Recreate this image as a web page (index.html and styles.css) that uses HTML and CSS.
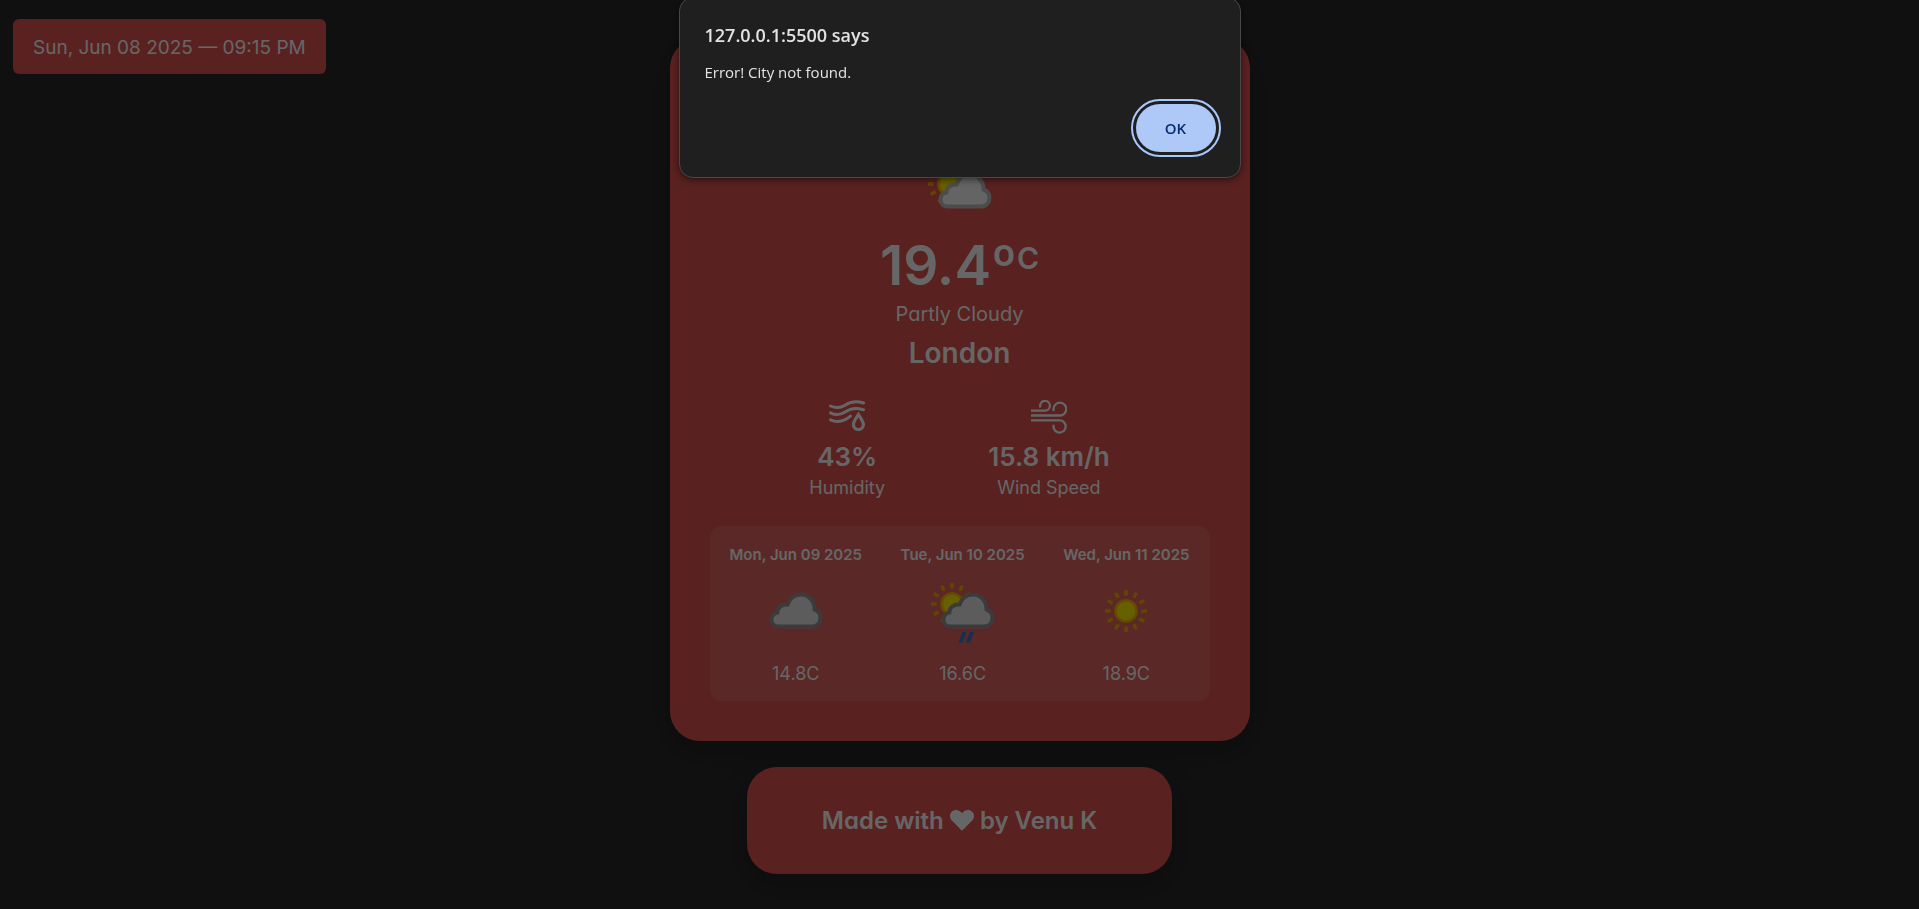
FILE: index.html
```html
<!DOCTYPE html>
<html lang="en">
<head>
<meta charset="utf-8">
<meta name="viewport" content="width=device-width, initial-scale=1">
<title>Weather</title>
<link rel="stylesheet" href="styles.css">
</head>
<body>
<svg class="sprite" aria-hidden="true">
  <defs>
    <radialGradient id="sunFill">
      <stop offset="0" stop-color="#fff000"/>
      <stop offset="0.68" stop-color="#fff000"/>
      <stop offset="0.8" stop-color="#ffc400"/>
      <stop offset="1" stop-color="#f5a500"/>
    </radialGradient>
    <g id="sun">
      <g stroke="#f5ae00" stroke-width="3.4">
        <path id="rays" d="M0-21V-15.4M0 15.4V21M-21 0H-15.4M15.4 0H21"/>
        <use href="#rays" transform="rotate(30)"/>
        <use href="#rays" transform="rotate(60)"/>
      </g>
      <circle r="12" fill="url(#sunFill)"/>
    </g>
    <path id="cloud" d="M8.500 33.500C4.500 33.500 1.500 30.600 1.500 26.500C1.500 23 3.800 20.300 7.300 19.600C7.500 14.500 12 11 17.500 11.600C19.500 5.500 24.500 1.500 31 1.500C38.500 1.500 44.500 7.500 44.600 16.500C48.500 17.800 50.500 21 50.500 25C50.500 30 47 33.500 42.500 33.500Z"/>
  </defs>
</svg>

<main class="page">
  <time class="clock" datetime="2025-06-08T21:15">Sun, Jun 08 2025 — 09:15 PM</time>

  <div class="column">
    <section class="card">
      <svg class="icon" viewBox="0 0 64 64" role="img" aria-label="Partly cloudy">
        <use href="#sun" x="21" y="25"/>
        <use class="cloud cloud-light" href="#cloud" x="11" y="14"/>
      </svg>
      <h1 class="temp">19.4º<sup>C</sup></h1>
      <p class="condition">Partly Cloudy</p>
      <h2 class="city">London</h2>

      <div class="details">
        <div class="detail">
          <svg class="detail-icon" viewBox="0 0 36 34" aria-hidden="true">
            <g fill="none" stroke="#fff" stroke-width="3" stroke-linecap="round">
              <path d="M1.500 6C6 8 11 8.300 16 5.200C21.500 1.500 28 .800 34.500 3"/>
              <path d="M1.500 12.800C6 15 11 15.300 16 12C21.500 8.200 28 7.500 34.500 9.800"/>
              <path d="M1.500 19.800C8 22.800 14.500 22 21.500 16.200"/>
              <path d="M30 14.500C27.500 18.400 25 21.500 25 24.500A5 5 0 0 0 35 24.500C35 21.500 32.500 18.400 30 14.500Z" stroke-width="3.200" transform="translate(-.6 0)"/>
            </g>
          </svg>
          <p class="value">43%</p>
          <p class="label">Humidity</p>
        </div>
        <div class="detail">
          <svg class="detail-icon" viewBox="0 0 36 34" aria-hidden="true">
            <g fill="none" stroke="#fff" stroke-width="2.300">
              <path d="M0 10.600H14A4.900 4.900 0 1 0 9.100 5.700V7.500"/>
              <path d="M0 15.500H28.500A6.400 6.400 0 1 0 22.500 9.100V11"/>
              <path d="M0 20.400H28.500A6.100 6.100 0 1 1 22.500 26.500V24.800"/>
            </g>
          </svg>
          <p class="value">15.8 km/h</p>
          <p class="label">Wind Speed</p>
        </div>
      </div>

      <div class="forecast">
        <div class="day">
          <h3 class="date">Mon, Jun 09 2025</h3>
          <svg class="icon" viewBox="0 0 64 64" role="img" aria-label="Cloudy">
            <use class="cloud cloud-dark" href="#cloud" x="6" y="14"/>
          </svg>
          <p class="day-temp">14.8C</p>
        </div>
        <div class="day">
          <h3 class="date">Tue, Jun 10 2025</h3>
          <svg class="icon" viewBox="0 0 64 64" role="img" aria-label="Light rain shower">
            <use href="#sun" x="21" y="25"/>
            <use class="cloud cloud-dark" href="#cloud" x="11" y="14"/>
            <path fill="#2a7dca" d="M31.500 53H35.500L31.500 63.500H27.300ZM39 53H43L39 63.500H34.700Z"/>
          </svg>
          <p class="day-temp">16.6C</p>
        </div>
        <div class="day">
          <h3 class="date">Wed, Jun 11 2025</h3>
          <svg class="icon" viewBox="0 0 64 64" role="img" aria-label="Sunny">
            <use href="#sun" x="32" y="32"/>
          </svg>
          <p class="day-temp">18.9C</p>
        </div>
      </div>
    </section>

    <footer class="credit">
      Made with
      <svg class="heart" viewBox="0 0 24 21" role="img" aria-label="love">
        <path fill="#fff" d="M12 20.800L1.800 10.600C-.700 7.900-.600 3.900 1.700 1.700C4.400-.700 8.400-.500 10.900 2L12 3.200L13.100 2C15.600-.500 19.600-.700 22.300 1.700C24.600 3.900 24.700 7.900 22.200 10.600Z"/>
      </svg>
      by Venu K
    </footer>
  </div>
</main>

<div class="scrim"></div>

<dialog class="alert" open aria-labelledby="alert-title">
  <form method="dialog">
    <h2 class="alert-title" id="alert-title">127.0.0.1:5500 says</h2>
    <p class="alert-text">Error! City not found.</p>
    <div class="alert-actions">
      <button class="ok" type="submit">OK</button>
    </div>
  </form>
</dialog>
</body>
</html>
```

FILE: styles.css
```css
* {
  box-sizing: border-box;
  margin: 0;
}

body {
  min-height: 100vh;
  background: #292929;
  color: #fff;
  font-family: Inter, "Open Sans", sans-serif;
  font-feature-settings: "cv11";
}

.sprite {
  display: block;
  width: 0;
  height: 0;
}

.page {
  display: grid;
  grid-template-columns: 1fr minmax(0, 580px) 1fr;
}

.clock {
  justify-self: start;
  align-self: start;
  margin: 19px 0 0 13px;
  padding: 13px 20px 11px;
  border-radius: 6px;
  background: #df5350;
  font-size: 19px;
  line-height: 31px;
  white-space: nowrap;
}

.column {
  display: flex;
  flex-direction: column;
  align-items: center;
  gap: 26px;
  padding: 38px 0 34px;
}

.card,
.credit {
  border-radius: 30px;
  background: #df5350;
  box-shadow: 0 10px 30px rgba(0, 0, 0, 0.2);
  text-align: center;
}

.card {
  width: 100%;
  padding: 121px 40px 40px;
}

.icon {
  display: block;
  width: 64px;
  height: 64px;
  margin: 0 auto;
}

.cloud {
  stroke-width: 4px;
}

.cloud-light {
  fill: #fafafa;
  stroke: #bdbdbd;
}

.cloud-dark {
  fill: #e6e6e6;
  stroke: #949494;
}

.temp {
  margin-top: 6px;
  font-size: 55px;
  font-weight: 600;
  line-height: 72px;
}

.temp sup {
  font-size: 30px;
  line-height: 0;
  vertical-align: 16px;
}

.condition {
  font-size: 20px;
  line-height: 26px;
}

.city {
  margin-top: 6px;
  font-size: 28px;
  font-weight: 600;
  line-height: 40px;
}

.details {
  display: flex;
  justify-content: center;
  gap: 103px;
  margin-top: 27px;
}

.detail-icon {
  display: block;
  width: 36px;
  height: 34px;
  margin: 0 auto;
}

.value {
  margin-top: 5px;
  font-size: 26px;
  font-weight: 600;
  line-height: 36px;
}

.label {
  font-size: 18px;
  line-height: 26px;
}

.forecast {
  display: flex;
  justify-content: space-between;
  margin-top: 25px;
  padding: 17px 20px 15px;
  border-radius: 12px;
  background: rgba(255, 255, 255, 0.1);
}

.date {
  margin-bottom: 12px;
  font-size: 15px;
  font-weight: 600;
  line-height: 24px;
}

.day-temp {
  margin-top: 19px;
  font-size: 18px;
  line-height: 24px;
}

.credit {
  padding: 36px 75px;
  font-size: 24px;
  font-weight: 600;
  line-height: 35px;
}

.heart {
  width: 24px;
  height: 21px;
  vertical-align: -2px;
}

.scrim {
  position: fixed;
  inset: 0;
  background: rgba(0, 0, 0, 0.6);
}

.alert {
  position: absolute;
  top: -3px;
  left: 0;
  right: 0;
  width: 562px;
  margin: 0 auto;
  padding: 24px 20px 25px 25px;
  border: 1px solid #484848;
  border-radius: 14px;
  background: #1f1f1f;
  box-shadow: 0 2px 6px rgba(0, 0, 0, 0.5);
  color: #e3e3e3;
  font-family: "Open Sans", "Noto Sans", sans-serif;
}

.alert-title {
  font-size: 18px;
  font-weight: 600;
  line-height: 26px;
}

.alert-text {
  margin-top: 12px;
  font-size: 15px;
  line-height: 24px;
}

.alert-actions {
  display: flex;
  justify-content: flex-end;
  margin-top: 20px;
  padding-right: 4px;
}

.ok {
  width: 80px;
  height: 48px;
  border: 0;
  border-radius: 24px;
  outline: 2px solid #a8c7fa;
  outline-offset: 3px;
  background: #aec9f7;
  color: #062e6f;
  font-family: inherit;
  font-size: 15px;
  font-weight: 600;
}
```
